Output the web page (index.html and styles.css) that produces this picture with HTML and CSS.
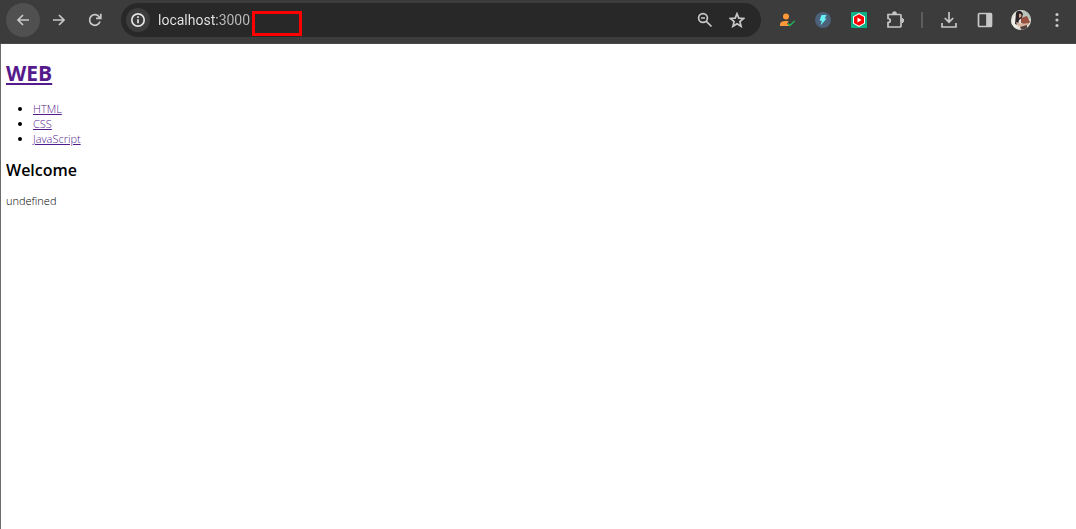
FILE: index.html
```html
<!DOCTYPE html>
<html lang="ko">
<head>
  <meta charset="UTF-8" />
  <meta name="viewport" content="width=device-width, initial-scale=1.0"/>
  <title>WEB - Welcome</title>
  <link rel="stylesheet" href="styles.css">
</head>
<body>
  <header class="toolbar">
    <button type="button" class="tool active" aria-label="Back">
      <svg width="16" height="16" viewBox="0 0 16 16" class="line"><path d="M14 8H3M8 3L3 8l5 5"/></svg>
    </button>
    <button type="button" class="tool" aria-label="Forward">
      <svg width="16" height="16" viewBox="0 0 16 16" class="line"><path d="M2 8h11M8 3l5 5-5 5"/></svg>
    </button>
    <button type="button" class="tool" aria-label="Reload">
      <svg width="16" height="16" viewBox="0 0 16 16" class="line"><path d="M13 9.500A5.300 5.300 0 1 1 12.300 5L13.500 6.300M9 6.300h4.800V1.700"/></svg>
    </button>

    <form class="omnibox">
      <button type="button" class="info" aria-label="Site information">
        <svg width="16" height="16" viewBox="0 0 16 16" class="line"><circle cx="8" cy="8" r="6.200"/><path d="M8 7.300v4M8 4.300v1.800"/></svg>
      </button>
      <input type="text" class="address" aria-label="Address" value="localhost:3000" />
      <span class="marker"></span>
      <button type="button" class="action" aria-label="Zoom">
        <svg width="16" height="16" viewBox="0 0 16 16" class="line"><circle cx="6" cy="6" r="4.400"/><path d="M9.300 9.300l5.200 5.200M4 6h4"/></svg>
      </button>
      <button type="button" class="action" aria-label="Bookmark">
        <svg width="16" height="16" viewBox="0 0 16 16" class="line"><path d="M8 1.700l1.800 4.400 4.800.4-3.700 3.100 1.200 4.700L8 11.700l-4.100 2.600 1.200-4.700-3.700-3.100 4.800-.4z"/></svg>
      </button>
    </form>

    <button type="button" class="tool" aria-label="Account extension">
      <svg width="16" height="16" viewBox="0 0 16 16"><circle cx="7" cy="4.500" r="3" fill="#ff9838"/><path d="M1 14v-1.500C1 10 3.500 9 7 9c1 0 2 .1 2.700.4L8 11.500l2.500 2.500z" fill="#ff9838"/><path d="M9 11.500l2 2 4.500-4.500" fill="none" stroke="#20b45b" stroke-width="1.400"/></svg>
    </button>
    <button type="button" class="tool" aria-label="Lightning extension">
      <svg width="16" height="16" viewBox="0 0 16 16"><circle cx="8" cy="8" r="8" fill="#4c6079"/><path d="M6.500 3h5L9.700 6.500h2L5.500 13.500l1.300-4.800H4.500z" fill="#68f2f5"/></svg>
    </button>
    <button type="button" class="tool" aria-label="Video extension">
      <svg width="16" height="16" viewBox="0 0 16 16"><rect width="16" height="16" rx="1" fill="#0cb286"/><path d="M8 1l6 3.500v7L8 15l-6-3.500v-7z" fill="#fff"/><path d="M8 2.200l5 2.900v5.800l-5 2.900-5-2.900V5.100z" fill="#f00"/><path d="M6.500 5.500v5l4-2.500z" fill="#fff"/></svg>
    </button>
    <button type="button" class="tool" aria-label="Extensions">
      <svg width="18" height="18" viewBox="0 0 18 18" class="line"><path d="M2 3.500h12a1 1 0 0 1 1 1V15a1 1 0 0 1-1 1H2v-4.500c3 0 3-4 0-4z"/><path d="M6.500 2.500a2 1.700 0 0 1 4 0zM16 7.500a1.700 2 0 0 1 0 4z" fill="#c7c7c7" stroke-width="1"/></svg>
    </button>
    <span class="separator"></span>
    <button type="button" class="tool" aria-label="Downloads">
      <svg width="18" height="18" viewBox="0 0 18 18" class="line"><path d="M9 1v10M4.800 7L9 11.200 13.200 7M2 12v4h14v-4"/></svg>
    </button>
    <button type="button" class="tool" aria-label="Side panel">
      <svg width="16" height="16" viewBox="0 0 16 16" class="line"><rect x="1.500" y="1.500" width="13" height="13" rx="1"/><path d="M10 2h4v12h-4z" fill="#c7c7c7"/></svg>
    </button>
    <button type="button" class="tool" aria-label="Profile">
      <svg width="20" height="20" viewBox="0 0 20 20">
        <clipPath id="face"><circle cx="10" cy="10" r="10"/></clipPath>
        <g clip-path="url(#face)">
          <path d="M0 0h20v20H0z" fill="#e2e0d8"/>
          <path d="M12 0h8v9h-8z" fill="#b8c5bb"/>
          <path d="M0 12l4-7 2 15H0z" fill="#f2eee8"/>
          <path d="M5 3c1-3 6-3 7 1l-1 4-3 2-1 5-3-1z" fill="#2b2527"/>
          <path d="M8 4c2-1 3 1 2 3L8 8z" fill="#d6a28c"/>
          <path d="M10 8l6-2 3 6-3 3-6-2z" fill="#97503f"/>
          <path d="M5 12l6 2 6-1-1 3-6 1-4-2z" fill="#d8b19c"/>
          <path d="M9 17l7-2v4l-5 2z" fill="#53423b"/>
        </g>
      </svg>
    </button>
    <button type="button" class="tool" aria-label="Menu">
      <svg width="16" height="16" viewBox="0 0 16 16" fill="#c7c7c7"><circle cx="8" cy="2.500" r="1.600"/><circle cx="8" cy="8" r="1.600"/><circle cx="8" cy="13.500" r="1.600"/></svg>
    </button>
  </header>

  <main class="page">
    <h1><a href="/">WEB</a></h1>
    <ul>
      <li><a href="/?id=HTML">HTML</a></li>
      <li><a href="/?id=CSS">CSS</a></li>
      <li><a href="/?id=JavaScript">JavaScript</a></li>
    </ul>
    <h2>Welcome</h2>
    <p>undefined</p>
  </main>
</body>
</html>
```

FILE: styles.css
```css
* { box-sizing: border-box; }

body {
  margin: 0; min-height: 100vh;
  display: flex; flex-direction: column;
  background: white; color: black;
  font-family: "Open Sans", "Noto Sans CJK KR", sans-serif;
}

button { padding: 0; border: none; background: none; cursor: pointer; }

.toolbar {
  display: flex; align-items: center; gap: 2px;
  padding: 3px 2px 6px 6px;
  background: #3c3c3c; border-bottom: 1px solid #4b474b;
}

.tool {
  flex: none; width: 34px; height: 34px;
  display: flex; align-items: center; justify-content: center;
  border-radius: 50%;
}
.tool.active { background: #505050; }
.tool:hover { background: #505050; }

.line { fill: none; stroke: #c7c7c7; stroke-width: 1.7; }

.omnibox {
  position: relative; flex: 1; min-width: 0; height: 34px;
  display: flex; align-items: center; gap: 8px;
  margin: 0 7px; padding: 0 12px 0 5px;
  border-radius: 17px; background: #282828;
}

.info {
  flex: none; width: 24px; height: 24px;
  display: flex; align-items: center; justify-content: center;
  border-radius: 50%; background: #3c3c3c;
}
.info .line { stroke: #e3e3e3; }

/* host name is brighter than the port */
.address {
  flex: 1; min-width: 0; padding: 0; border: none; outline: none;
  background: linear-gradient(to right, #e8e8e8 60px, #bdbdbd 60px);
  background-clip: text; color: transparent; caret-color: white;
  font-family: Roboto, sans-serif; font-size: 14px; line-height: 20px;
}

.marker {
  position: absolute; left: 131px; top: 8px;
  width: 50px; height: 25px; border: 3px solid red;
}

.action {
  flex: none; width: 24px; height: 24px;
  display: flex; align-items: center; justify-content: center;
}

.separator { width: 2px; height: 16px; margin: 0 7px; background: #5c5c5c; }

.page {
  flex: 1; padding: 15px 5px;
  border-left: 1px solid #6b6b6b;
  font-size: 11px; line-height: 15px; font-weight: 300;
}

.page a { color: #551a8b; }

h1 { margin: 0 0 13px; font-size: 21px; line-height: 29px; font-weight: 700; }
ul { margin: 0 0 13px; padding-left: 27px; }
h2 { margin: 0 0 12px; font-size: 16px; line-height: 22px; font-weight: 600; }
p { margin: 0; }
```
